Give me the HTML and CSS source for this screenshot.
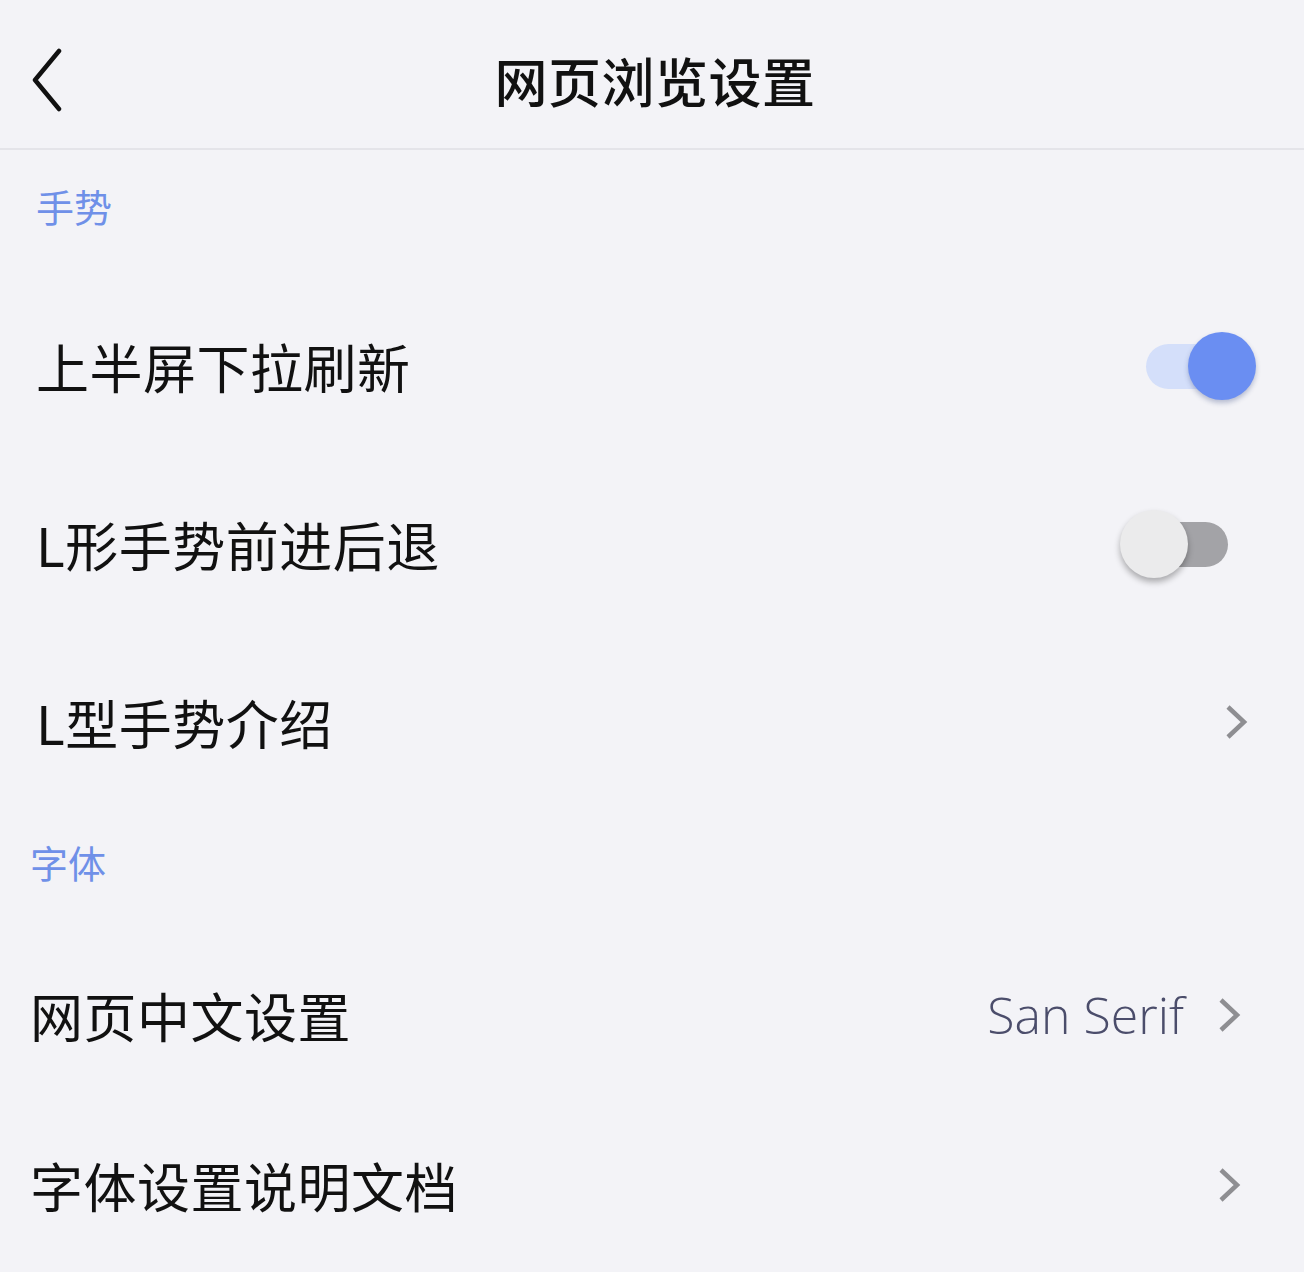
FILE: index.html
```html
<!DOCTYPE html>
<html>
<head>
  <title>网页浏览设置</title>
  <link rel="stylesheet" href="styles.css">
</head>
<body>

  <header class="topbar">
    <a class="back" href="#">
      <svg width="32" height="64" viewBox="0 0 32 64">
        <path d="M27 3 L3 32 L27 61" fill="none" stroke="#111" stroke-width="4.5" stroke-linecap="round" stroke-linejoin="round"/>
      </svg>
    </a>
    <h1 class="title">网页浏览设置</h1>
    <span></span>
  </header>

  <!-- 手势 -->
  <section class="group group-gesture">
    <h2 class="group-label">手势</h2>

    <div class="row">
      <span class="row-text">上半屏下拉刷新</span>
      <span class="switch on"><span class="knob"></span></span>
    </div>

    <div class="row">
      <span class="row-text">L形手势前进后退</span>
      <span class="switch"><span class="knob"></span></span>
    </div>

    <div class="row">
      <span class="row-text">L型手势介绍</span>
      <svg class="chevron" width="24" height="36" viewBox="0 0 24 36">
        <path d="M4 3 L20 18 L4 33" fill="none" stroke="#8e8e92" stroke-width="4.5"/>
      </svg>
    </div>
  </section>

  <!-- 字体 -->
  <section class="group group-font">
    <h2 class="group-label">字体</h2>

    <div class="row">
      <span class="row-text">网页中文设置</span>
      <span class="row-value">San Serif</span>
      <svg class="chevron" width="24" height="36" viewBox="0 0 24 36">
        <path d="M4 3 L20 18 L4 33" fill="none" stroke="#8e8e92" stroke-width="4.5"/>
      </svg>
    </div>

    <div class="row">
      <span class="row-text">字体设置说明文档</span>
      <svg class="chevron" width="24" height="36" viewBox="0 0 24 36">
        <path d="M4 3 L20 18 L4 33" fill="none" stroke="#8e8e92" stroke-width="4.5"/>
      </svg>
    </div>
  </section>

</body>
</html>
```

FILE: styles.css
```css
body {
  margin: 0;
  font-family: "Noto Sans CJK SC", "Noto Sans", sans-serif;
  background-color: #f3f3f7; /* page grey */
  color: #111;
}

/* Top bar */
.topbar {
  height: 136px;
  padding-top: 12px;
  display: grid;
  grid-template-columns: 1fr auto 1fr;
  align-items: center;
  border-bottom: 2px solid #e4e4e9;
}

.back {
  display: flex;
  padding-left: 32px;
}

.title {
  margin: 0;
  font-size: 53px;
  font-weight: 500;
  line-height: 64px;
  letter-spacing: 0.5px;
  padding-left: 6px;
}

/* Groups */
.group-gesture {
  padding: 0 56px 0 36px;
}

.group-font {
  padding: 0 63px 0 30px;
}

.group-label {
  margin: 0;
  font-size: 38px;
  font-weight: 400;
  line-height: 40px;
  color: #6f90e8; /* soft blue */
}

.group-gesture .group-label {
  padding: 36px 0 51px;
}

.group-font .group-label {
  padding: 31px 0 48px;
}

.row {
  height: 178px;
  display: flex;
  align-items: center;
}

.group-font .row {
  height: 170px;
}

.row-text {
  flex-grow: 1;
  font-size: 53px;
  line-height: 64px;
  letter-spacing: 0.5px;
}

.row-value {
  font-family: "Open Sans", "Noto Sans", sans-serif;
  font-weight: 300;
  font-size: 50px;
  color: #4b4d6b;
  margin-right: 33px;
}

.chevron {
  display: block;
}

/* Toggle switches */
.switch {
  position: relative;
  width: 88px;
  height: 45px;
  margin-right: 20px;
  border-radius: 23px;
  background-color: #a3a3a7; /* off track */
}

.switch .knob {
  position: absolute;
  top: -12px;
  left: -20px;
  width: 68px;
  height: 68px;
  border-radius: 50%;
  background-color: #ebebec;
  box-shadow: 0 4px 6px rgba(0, 0, 0, 0.3);
}

.switch.on {
  background-color: #d4dffa; /* light blue track */
  margin-right: 14px;
}

.switch.on .knob {
  left: auto;
  right: -22px;
  background-color: #6a8ef2;
  box-shadow: 0 3px 5px rgba(40, 60, 120, 0.3);
}
```
